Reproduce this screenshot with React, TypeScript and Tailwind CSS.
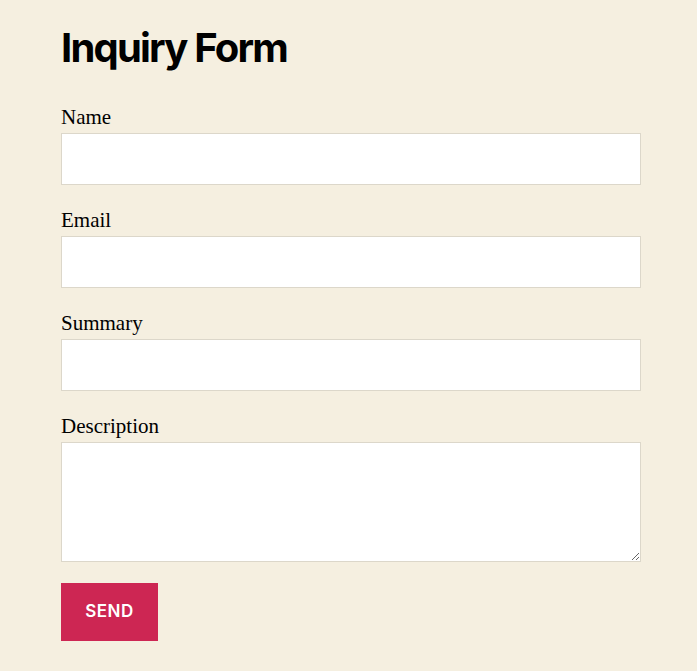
export default function App() {
  const fields = ["Name", "Email", "Summary"]
  return (
    <div className="min-h-[671px] bg-[#f5efe0] pl-[61px] pt-[24px]">
      <h1 className="font-['Inter',sans-serif] text-[40px] leading-[48px] font-bold tracking-[-0.045em] text-black">Inquiry Form</h1>
      <form className="w-[580px] mt-[33px] flex flex-col font-['Liberation_Serif',serif] text-black" onSubmit={(e) => e.preventDefault()}>
        {fields.map((f) => (
          <div key={f} className="mb-[23px]">
            <label className="block text-[21px] leading-[24px] mb-[4px]">{f}</label>
            <input type="text" className="block w-full h-[52px] bg-white border border-[#dcd7ca] outline-none px-3" />
          </div>
        ))}
        <div>
          <label className="block text-[21px] leading-[24px] mb-[4px]">Description</label>
          <textarea className="block w-full h-[120px] bg-white border border-[#dcd7ca] outline-none px-3" />
        </div>
        <div className="mt-[21px]">
          <button type="submit" className="bg-[#cd2653] text-white font-['Inter',sans-serif] font-semibold uppercase text-[17px] tracking-[0.03em] h-[58px] w-[97px]">Send</button>
        </div>
      </form>
    </div>
  )
}
